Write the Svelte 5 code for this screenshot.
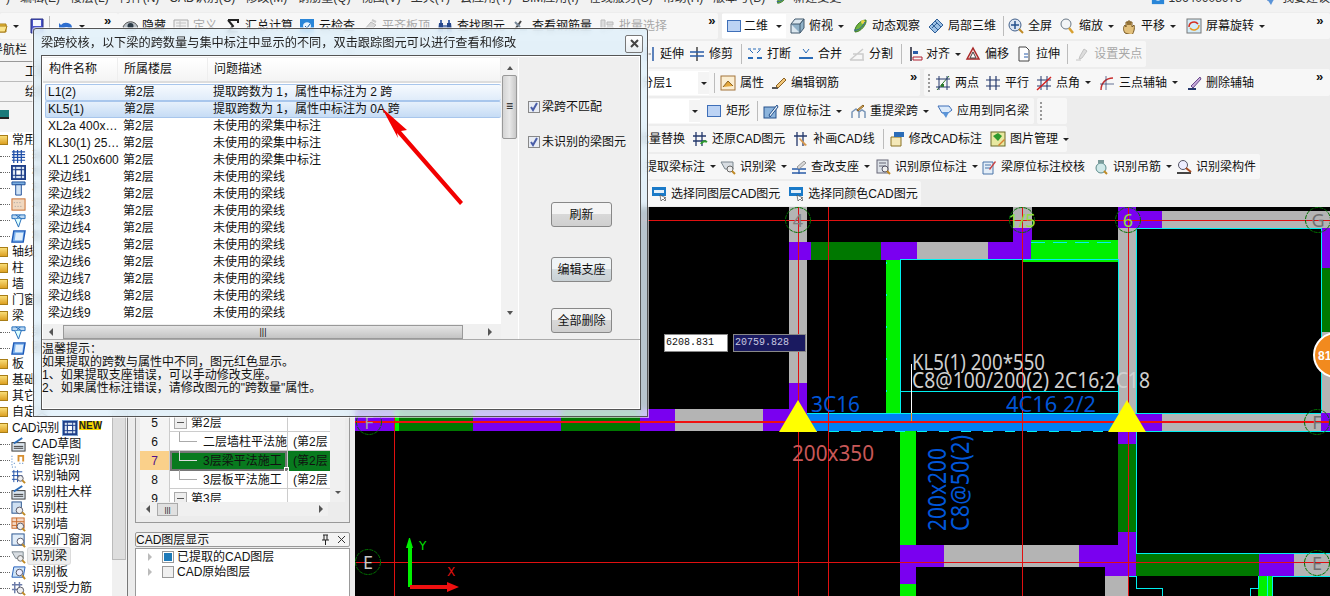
<script>
	const ICONS = {
		folder: '<path d="M1 5h5l1 1h7v8H1z" fill="#f2c53d" stroke="#a87d16"/><path d="M1 14l2-6h12l-2 6z" fill="#fbe48a" stroke="#a87d16"/>',
		save: '<path d="M2 1h12v14H2z" fill="#4a54c8" stroke="#242c80"/><path d="M4 2h8v6H4z" fill="#f4f6ff"/><path d="M5 10h6v5H5z" fill="#c9d0ea"/>',
		undo: '<path d="M3 7a6 5 0 0 1 11 3c0 2-1 3-2 4 0-4-3-6-6-4l2 2H1V5l2 2z" fill="#2f6fd0"/>',
		eye: '<path d="M1 9c3-7 12-7 15 0-3 5-12 5-15 0z" fill="#b9c0c6" stroke="#555"/><circle cx="8.500" cy="8" r="3" fill="#2c3a46"/>',
		doc: '<path d="M1 2h14v12H1z" fill="#f0f0f0" stroke="#aaa"/><path d="M3 5h10M3 8h10M3 11h10M7 3v10" stroke="#c4c4c4"/>',
		sigma: '<path d="M3 2h10v3M13 14H3l5-6-5-6" fill="none" stroke="#222" stroke-width="2"/>',
		cloud: '<path d="M1 1h14v14H1z" fill="#2a86d8"/><path d="M4 8c0-5 8-5 8 0 0 4-8 4-8 0z" fill="#e8f3fc"/><path d="M6 8l2 2 3-4" stroke="#1a5ea8" fill="none"/>',
		flat: '<path d="M2 12l7-8 5 3-7 7z" fill="#d8d8d8" stroke="#bbb"/><path d="M10 2l4 2" stroke="#c8c8c8" stroke-width="2"/>',
		binoc: '<path d="M2 5h4v9H1zM10 5h4l1 9h-5z" fill="#27488c"/><path d="M6 7h4v3H6z" fill="#6f87b8"/><path d="M3 2h2v3H3zM11 2h2v3h-2z" fill="#4c6cac"/>',
		rebar: '<path d="M2 13L9 3" stroke="#444" stroke-width="2"/><path d="M8 12h7M3 4l5 5" stroke="#7a8a9a" stroke-width="2"/>',
		batch: '<path d="M2 2h4v12H2zM8 4h6v3H8zM8 9h6v3H8z" fill="#ddd" stroke="#bbb"/>',
		square: '<rect x="1.500" y="2.500" width="13" height="11" fill="#bcd3f4" stroke="#3f6fb8"/>',
		cube: '<path d="M2 6l4-5h9l-4 5v9H2z" fill="#dbe7ef" stroke="#41586c"/><path d="M2 6h9v9M11 6l4-5v9l-4 5" fill="#8fb1c8" stroke="#41586c"/>',
		orbit: '<path d="M3 14C2 9 8 2 14 2c1 4-5 12-11 12z" fill="#70b43c" stroke="#3d7a26"/><circle cx="11" cy="4" r="2" fill="#e8d648"/><path d="M2 12c4 1 8-2 11-8" stroke="#2a5ca8" fill="none"/>',
		local3d: '<path d="M1 9l8-8 6 6-8 8z" fill="#9cc0e4" stroke="#2e5f98"/><path d="M4 6l6 6M7 3l6 6M9 5l-5 5" stroke="#2e5f98"/>',
		full: '<circle cx="7" cy="7" r="6" fill="#dbe5f2" stroke="#44628c"/><path d="M7 3v8M3 7h8" stroke="#24508c" stroke-width="1.500"/><path d="M11 11l4 4" stroke="#c08a24" stroke-width="2"/>',
		glass: '<circle cx="7" cy="6" r="5" fill="#f2f4f6" stroke="#6a7886"/><path d="M10 10l4 5" stroke="#d8a030" stroke-width="2.500"/>',
		hand: '<path d="M4 15c-2-3-2-6 0-8l1 2V4h2v3-4h2v4-3h2v5l2-2c1 3 0 7-2 10z" fill="#e2c07c" stroke="#7a5a24"/>',
		rotate: '<rect x="1" y="1" width="14" height="14" fill="#d4ecf8" stroke="#777"/><path d="M3 9a5 5 0 0 1 9-3" stroke="#d43020" stroke-width="1.500" fill="none"/><path d="M13 7a5 5 0 0 1-9 3" stroke="#e89a20" stroke-width="1.500" fill="none"/>',
		extend: '<path d="M7 1v14M13 1v14" stroke="#2a5ca8" stroke-width="1.500"/><path d="M1 8h10" stroke="#777"/>',
		trim: '<path d="M8 1v14" stroke="#444" stroke-width="1.500"/><path d="M1 6h14M1 10h14" stroke="#2a5ca8" stroke-width="1.500"/>',
		breaks: '<path d="M1 12h5M10 12h5" stroke="#2a6cb8" stroke-width="2"/><path d="M3 4l3 3M13 4l-3 3" stroke="#2a6cb8"/><path d="M1 3h14" stroke="#2a6cb8" stroke-dasharray="3 2"/>',
		merge: '<path d="M1 12h14" stroke="#2a6cb8" stroke-width="2"/><path d="M5 3l3 4 3-4" stroke="#2a6cb8" fill="none"/>',
		split: '<path d="M1 14L14 3M1 14h14M4 8h10v6" stroke="#ccc" stroke-width="1.500" fill="none"/>',
		align: '<path d="M3 1v14" stroke="#223" stroke-width="1.500"/><path d="M5 5h5v3H5z" fill="#2a5ca8"/><path d="M5 11h9v3H5z" fill="none" stroke="#b02030"/>',
		offset: '<path d="M2 13L8 2l6 11z" fill="#f4d4d0" stroke="#a82828" stroke-width="1.500"/><path d="M5 12l3-6 3 6z" fill="#fff" stroke="#444"/>',
		stretch: '<path d="M3 1h7l3 3v11H3z" fill="#fff" stroke="#444"/><path d="M8 8h4M8 11h4" stroke="#2a5ca8"/>',
		grip: '<path d="M2 14h5M10 3l3 2-5 7-3 1 1-3z" fill="#ddd" stroke="#c4c4c4"/>',
		prop: '<rect x="1" y="1" width="14" height="14" fill="#fbeed2" stroke="#a4743a"/><path d="M3 12l5-6 5 5" fill="#e4a83c" stroke="#8a6224"/>',
		editbar: '<path d="M1 13h6" stroke="#222" stroke-width="1.500"/><path d="M5 11l8-8 2 2-8 8z" fill="#f2c678" stroke="#8a6224"/>',
		twopts: '<path d="M2 15L14 1" stroke="#2e7a2e"/><path d="M1 4h14M1 12h14M4 1v14M12 1v14" stroke="#24386c"/><path d="M6 9h3v3H6z" fill="#2e7a2e"/>',
		parallel: '<path d="M1 5h14M1 11h14M5 1v14M11 1v14" stroke="#24386c" stroke-width="1.200"/>',
		angle: '<path d="M1 5h14M1 11h14M5 1v14M11 1v14" stroke="#24386c"/><path d="M1 15L15 2" stroke="#d42020" stroke-width="1.500"/>',
		three: '<path d="M2 15c0-7 5-12 12-12" stroke="#c83030" fill="none" stroke-width="1.500"/><path d="M1 9h14M7 1v14" stroke="#24386c" stroke-width=".7"/>',
		delaxis: '<path d="M2 14h8" stroke="#24386c" stroke-width="2"/><path d="M5 11l9-9 1 2-8 9z" fill="#c4a8d8" stroke="#6a4a8c"/>',
		inplace: '<rect x="1" y="4" width="12" height="11" fill="#8cb4dc" stroke="#24508c"/><path d="M6 12l8-10 1 2-8 10z" fill="#e8f0f8" stroke="#24508c"/>',
		refetch: '<path d="M2 15V9l4-3 3 3v6M9 15V9l3-2 3 2v6" fill="none" stroke="#7a96b8" stroke-width="1.500"/><path d="M7 7l6-5 1 1-6 5z" fill="#e8b860" stroke="#8a6224"/>',
		apply: '<path d="M1 3h11l3 4-4 3H5z" fill="#dbeafa" stroke="#3f6fb8"/><path d="M5 9h7l-3 6z" fill="#5a94d8"/>',
		restore: '<path d="M4 1v14M10 1v14M1 5h13M1 10h13" stroke="#24386c" stroke-width="1.300"/><path d="M9 13a4 4 0 0 1 6-2" stroke="#2e9a2e" stroke-width="2" fill="none"/>',
		redraw: '<path d="M4 1v14M10 1v14M1 5h13" stroke="#24386c" stroke-width="1.300"/><path d="M7 7l7 7-2 1-6-7z" fill="#d89a50"/>',
		cadedit: '<path d="M2 6h10v9H2z" fill="#f4e8b8" stroke="#8a7224"/><path d="M5 1h10v5H5z" fill="#2a6cb8"/>',
		picture: '<rect x="1" y="1" width="14" height="14" fill="#e8e8a0" stroke="#6a6a28"/><path d="M3 5l5-3 4 3-4 5z" fill="#2e9a2e"/><path d="M8 14l6-6 1 1-6 6z" fill="#d88030"/>',
		recbeam: '<path d="M1 3h12v7H5z" fill="#d8dde2" stroke="#7a868e"/><circle cx="10" cy="10" r="3" fill="#eee" stroke="#666"/><path d="M12 12l3 3" stroke="#c08a24" stroke-width="2"/>',
		support: '<path d="M1 10h14M1 14h14M8 10v5" stroke="#2a5ca8" stroke-width="1.300"/><path d="M6 8l7-6 2 2-7 6z" fill="#d8d8d8" stroke="#999"/>',
		recplace: '<rect x="2" y="1" width="11" height="13" fill="#dde2e8" stroke="#667"/><path d="M4 4h7M4 7h7" stroke="#667"/><circle cx="10" cy="10" r="3" fill="#eee" stroke="#556"/><path d="M12 12l3 3" stroke="#c08a24" stroke-width="2"/>',
		verify: '<path d="M2 3h10v12H2z" fill="#e4eef8" stroke="#4a74a8"/><path d="M4 6h6M4 9h6" stroke="#4a74a8"/><path d="M8 10l6-8 1 1-6 8z" fill="#c84040"/>',
		stirrup: '<circle cx="8" cy="9" r="5" fill="#cfe8e8" stroke="#5a8a8a"/><path d="M5 1h6v3H5z" fill="#7a9a9a"/><path d="M11 12l3 3" stroke="#c08a24" stroke-width="2"/>',
		member: '<path d="M1 14h14" stroke="#444" stroke-width="2"/><circle cx="7" cy="6" r="4.500" fill="#eef" stroke="#556"/><path d="M10 9l5 4" stroke="#a84a20" stroke-width="2"/>',
		cadsel: '<rect x="1" y="1" width="14" height="9" fill="#1a7ac8"/><path d="M3 4h10v3H3z" fill="#e4f0fa"/><path d="M9 9l1 6 2-2 2 2 1-1-2-2h2z" fill="#fff" stroke="#333" stroke-width=".6"/>',
		grid: '<path d="M1 3h14M1 6h14M1 9h14M1 12h14M3 1v14M7 1v14M11 1v14" stroke="#1e4ea8" stroke-width="1.300"/>',
		frame: '<rect x="1" y="1" width="14" height="14" fill="#d8e4f2" stroke="#1e3e88" stroke-width="2"/><rect x="5" y="5" width="6" height="6" fill="#fff" stroke="#1e3e88"/><path d="M1 5h14M1 11h14M5 1v14M11 1v14" stroke="#1e3e88"/>',
		column: '<path d="M1 1h14v3H1z" fill="#7aaee0" stroke="#1e4e98"/><path d="M5 4h6v11H5z" fill="#cfe2f5" stroke="#1e4e98"/>',
		wall: '<rect x="1" y="2" width="14" height="12" fill="#f0d8c0" stroke="#c86a2a"/><path d="M3 6h8M4 10h9" stroke="#999" stroke-dasharray="1 2"/>',
		beam: '<path d="M1 2h14v4H1z" fill="#bcd8f2" stroke="#1e6ab8"/><path d="M4 6l4 9 3-9" fill="#dff" stroke="#1e6ab8"/><path d="M5 2l6 4M10 2L6 6" stroke="#1e6ab8"/>',
		slab: '<path d="M3 2h12l-2 12H1z" fill="#7ab0ec" stroke="#1e5ab8" stroke-width="1.500"/><path d="M5 4h8l-1 8H4z" fill="#e0eefc"/>',
		cad: '<rect x="1" y="6" width="14" height="9" fill="#dbe4ec" stroke="#333"/><path d="M3 7l9-6" stroke="#2a6cb8" stroke-width="2"/><path d="M3 10h10M3 12h10" stroke="#333"/>',
		magnet: '<path d="M7 2h7v7h-2V4h-3v5H7z" fill="#d89030"/><path d="M1 3v12h6" stroke="#2a6cb8" stroke-dasharray="1 2" fill="none"/><path d="M3 11h2M9 11h4" stroke="#2a6cb8" stroke-dasharray="1 2"/>',
		recgrid: '<path d="M1 3h11M1 7h11M1 11h11M3 1v13M7 1v13" stroke="#1e4ea8"/><circle cx="10" cy="10" r="3" fill="#eee" stroke="#556"/><path d="M12 12l3 3" stroke="#c08a24" stroke-width="2"/>',
		reccol: '<rect x="1" y="1" width="10" height="12" fill="#cfe0f2" stroke="#24508c"/><circle cx="9" cy="10" r="3.500" fill="#eee" stroke="#556"/><path d="M12 12l3 3" stroke="#c08a24" stroke-width="2"/>',
		recwall: '<rect x="1" y="1" width="13" height="11" fill="#f4d8c4" stroke="#c86a2a"/><path d="M1 5h13M1 9h13M6 1v11" stroke="#c86a2a"/><circle cx="10" cy="10" r="3.500" fill="#eee" stroke="#556"/><path d="M12 12l3 3" stroke="#c08a24" stroke-width="2"/>',
		recdoor: '<rect x="1" y="1" width="13" height="12" fill="#e0ecf8" stroke="#24508c"/><circle cx="10" cy="9" r="3.500" fill="#fff" stroke="#556"/><path d="M12 12l3 3" stroke="#c08a24" stroke-width="2"/>',
		recslab: '<path d="M3 2h12l-2 11H1z" fill="#cfe4f8" stroke="#1e5ab8"/><circle cx="9" cy="8" r="3.500" fill="#eef" stroke="#556"/><path d="M12 11l3 4" stroke="#c08a24" stroke-width="2"/>',
		recbar: '<path d="M1 4h11M1 9h11M4 1v12M9 1v12" stroke="#6a7aa8" stroke-width="1.500"/><circle cx="10" cy="10" r="3.500" fill="#eee" stroke="#556"/><path d="M12 12l3 3" stroke="#c08a24" stroke-width="2"/>'
	};

	const R1 = [
		{ x: 0, w: 118, items: [
			{ i: 'folder', ml: -8, caret: true, noPad: true },
			{ i: 'save', ml: 10, noPad: true },
			{ sep: true, ml: 4 },
			{ i: 'undo', ml: 6, caret: true, noPad: true },
			{ more: true, ml: 19 }
		] },
		{ x: 118, w: 600, items: [
			{ t: '隐藏', i: 'eye' },
			{ t: '定义', i: 'doc', gray: true, ml: -1 },
			{ t: '汇总计算', i: 'sigma' },
			{ t: '云检查', i: 'cloud', ml: -2 },
			{ t: '平齐板顶', i: 'flat', gray: true, ml: -1 },
			{ t: '查找图元', i: 'binoc', ml: -1 },
			{ t: '查看钢筋量', i: 'rebar', ml: -1 },
			{ t: '批量选择', i: 'batch', gray: true, ml: -1 },
			{ more: true, ml: 37 }
		] },
		{ x: 722, w: 608, items: [
			{ t: '二维', i: 'square', caret: true, white: true, narrow: true },
			{ t: '俯视', i: 'cube', caret: true, ml: -1 },
			{ t: '动态观察', i: 'orbit' },
			{ t: '局部三维', i: 'local3d' },
			{ sep: true },
			{ t: '全屏', i: 'full', ml: -2 },
			{ t: '缩放', i: 'glass', caret: true, ml: -1 },
			{ t: '平移', i: 'hand', caret: true, ml: -1 },
			{ t: '屏幕旋转', i: 'rotate', caret: true, ml: 2 },
			{ more: true, ml: 47 }
		] }
	];

	const ROW_H = [28, 29, 28, 28, 27, 27];

	const RIGHT_ROWS = [
		[
			{ x: 636, w: 510, items: [
				{ t: '延伸', i: 'extend' }, { t: '修剪', i: 'trim', ml: -3 }, { sep: true, ml: 4 },
				{ t: '打断', i: 'breaks', ml: -1 }, { t: '合并', i: 'merge', ml: -1 }, { t: '分割', i: 'split', ml: -1 }, { sep: true, ml: 4 },
				{ t: '对齐', i: 'align', caret: true, narrow: true },
				{ t: '偏移', i: 'offset', ml: -4 }, { t: '拉伸', i: 'stretch', ml: -1 }, { sep: true },
				{ t: '设置夹点', i: 'grip', gray: true }
			] }
		],
		[
			{ x: 620, w: 300, items: [
				{ combo: '分层1', w: 89 }, { sep: true, ml: 5 },
				{ t: '属性', i: 'prop', ml: -1 }, { t: '编辑钢筋', i: 'editbar', ml: -1 },
				{ more: true, ml: 67 }
			] },
			{ x: 924, w: 406, gap: 4, items: [
				{ dots: true },
				{ t: '两点', i: 'twopts', ml: 1 }, { t: '平行', i: 'parallel', ml: -2 },
				{ t: '点角', i: 'angle', caret: true, ml: -1 },
				{ t: '三点辅轴', i: 'three', caret: true },
				{ t: '删除辅轴', i: 'delaxis' },
				{ more: true, ml: 58 }
			] }
		],
		[
			{ x: 620, w: 414, items: [
				{ combo: '', w: 80 },
				{ t: '矩形', i: 'square', ml: 2 }, { sep: true },
				{ t: '原位标注', i: 'inplace', caret: true, ml: -1 },
				{ t: '重提梁跨', i: 'refetch', caret: true },
				{ t: '应用到同名梁', i: 'apply' }
			] },
			{ x: 1037, w: 30, gap: 3, items: [{ dots: true }] }
		],
		[
			{ x: 613, w: 454, items: [
				{ t: '批量替换', i: 'batch' },
				{ t: '还原CAD图元', i: 'restore', ml: -1 },
				{ t: '补画CAD线', i: 'redraw' },
				{ sep: true, ml: 4 },
				{ t: '修改CAD标注', i: 'cadedit', ml: -1 },
				{ t: '图片管理', i: 'picture', caret: true }
			] }
		],
		[
			{ x: 621, w: 639, items: [
				{ t: '提取梁标注', i: 'recbeam', caret: true },
				{ t: '识别梁', i: 'recbeam', caret: true, ml: -4 },
				{ t: '查改支座', i: 'support', caret: true, ml: -4 },
				{ t: '识别原位标注', i: 'recplace', caret: true, ml: -3 },
				{ t: '梁原位标注校核', i: 'verify', ml: -5 },
				{ t: '识别吊筋', i: 'stirrup', caret: true },
				{ t: '识别梁构件', i: 'member', ml: -4 }
			] }
		],
		[
			{ x: 647, w: 274, items: [
				{ t: '选择同图层CAD图元', i: 'cadsel' },
				{ t: '选择同颜色CAD图元', i: 'cadsel' }
			] }
		]
	];

	const MENU = ['编辑(E)', '楼层(L)', '构件(N)', 'CAD识别(C)', '修改(M)', '钢筋量(Q)', '视图(V)', '工具(T)', '云应用(Y)', 'BIM应用(I)', '在线服务(S)', '帮助(H)', '版本号(B)'];

	const TREE = [
		{ t: '常用', top: 1 }, { i: 'grid', t: '轴网' }, { i: 'frame', t: '框架' }, { i: 'column', t: '柱' }, { i: 'wall', t: '墙' }, { i: 'beam', t: '梁' }, { i: 'slab', t: '板' },
		{ t: '轴线', top: 1 }, { t: '柱', top: 1 }, { t: '墙', top: 1 }, { t: '门窗洞', top: 1 }, { t: '梁', top: 2 }, { i: 'beam', t: '梁' }, { i: 'slab', t: '圈梁' },
		{ t: '板', top: 1 }, { t: '基础', top: 1 }, { t: '其它', top: 1 }, { t: '自定义', top: 1 }, { t: 'CAD识别', top: 2, isCad: true },
		{ i: 'cad', t: 'CAD草图' }, { i: 'magnet', t: '智能识别' }, { i: 'recgrid', t: '识别轴网' }, { i: 'cad', t: '识别柱大样' }, { i: 'reccol', t: '识别柱' }, { i: 'recwall', t: '识别墙' }, { i: 'recdoor', t: '识别门窗洞' },
		{ i: 'recbeam', t: '识别梁', sel: true }, { i: 'recslab', t: '识别板' }, { i: 'recbar', t: '识别受力筋' }
	];

	const GRID = [
		{ n: 5, t: '第2层', head: true },
		{ n: 6, t: '二层墙柱平法施', f: '(第2层' },
		{ n: 7, t: '3层梁平法施工', f: '(第2层', sel: true },
		{ n: 8, t: '3层板平法施工', f: '(第2层' },
		{ n: 9, t: '第3层', head: true }
	];

	const USED = '未使用的梁集中标注';
	const LINE = '未使用的梁线';
	const ROWS = [
		{ a: 'L1(2)', c: '提取跨数为 1，属性中标注为 2 跨', hl: 1 },
		{ a: 'KL5(1)', c: '提取跨数为 1，属性中标注为 0A 跨', hl: 2 },
		{ a: 'XL2a 400x…', c: USED },
		{ a: 'KL30(1) 25…', c: USED },
		{ a: 'XL1 250x600', c: USED },
		...[1, 2, 3, 4, 5, 6, 7, 8, 9].map((n) => ({ a: '梁边线' + n, c: LINE }))
	];

	const PURPLE = '#7a00f0';
	const GRAY = '#b4b4b4';
	const DARK = '#007800';
	const BRIGHT = '#00f000';
	const BLUE = '#0080f4';

	// [x, y, w, h, colour], screen coordinates
	const BLOCKS = [
		[355, 409, 39, 22, PURPLE], [394, 409, 5, 22, BRIGHT], [399, 409, 74, 22, DARK], [473, 409, 88, 22, PURPLE], [561, 409, 79, 22, DARK],
		[640, 409, 35, 22, PURPLE], [675, 409, 88, 22, GRAY], [763, 409, 44, 22, PURPLE],
		[789, 207, 18, 176, GRAY], [789, 383, 18, 26, PURPLE], [789, 242, 22, 18, PURPLE], [811, 242, 70, 18, DARK], [881, 242, 36, 18, PURPLE],
		[917, 242, 71, 18, GRAY], [988, 242, 44, 18, PURPLE], [1013, 207, 19, 21, GRAY], [1013, 228, 19, 14, PURPLE],
		[1031, 240, 87, 19, BRIGHT], [1022, 259, 96, 3, BRIGHT], [886, 260, 14, 153, BRIGHT],
		[1118, 228, 18, 185, GRAY], [1118, 207, 18, 21, PURPLE], [1136, 211, 26, 17, PURPLE], [1162, 211, 168, 17, GRAY],
		[1321, 228, 9, 40, PURPLE], [1321, 268, 9, 64, DARK], [1321, 332, 9, 81, GRAY],
		[807, 413, 311, 18, BLUE], [1118, 413, 44, 18, PURPLE], [1162, 413, 159, 18, GRAY], [1321, 413, 9, 18, PURPLE],
		[900, 431, 16, 114, BRIGHT], [1118, 431, 18, 13, PURPLE], [1118, 444, 18, 88, DARK], [1118, 532, 18, 22, PURPLE],
		[900, 545, 44, 22, PURPLE], [944, 545, 135, 22, GRAY], [1079, 545, 57, 22, PURPLE], [900, 567, 16, 17, PURPLE], [900, 584, 16, 12, BRIGHT],
		[1105, 567, 31, 9, PURPLE], [1105, 576, 23, 20, GRAY],
		[1136, 554, 123, 22, DARK], [1259, 554, 35, 22, PURPLE], [1294, 554, 36, 22, GRAY], [1258, 576, 9, 20, BRIGHT], [1268, 576, 4, 20, BRIGHT]
	];

	const CYAN_LINES = [
		'M1136 228H1321V413', 'M900 259H1118', 'M900 391H1118', 'M900 259V413', 'M1118 259V413', 'M1136 228V413',
		'M807 413H1321', 'M1118 431H1330', 'M1136 431V553H1330', 'M1128 576H1136V588H1162V596', 'M1250 596V588H1258V576M1267 576V596M1272 596V576H1330'
	];

	const AXES = [
		{ x: 798, y: 220, t: '4', c: '#808080' }, { x: 1022, y: 220, t: '1/5', c: '#90e040' }, { x: 1128, y: 220, t: '6', c: '#90e040' },
		{ x: 1318, y: 220, t: 'G', c: '#707070' }, { x: 1317, y: 422, t: 'F', c: '#707070' }, { x: 1317, y: 563, t: 'E', c: '#707070' },
		{ x: 369, y: 422, t: 'F', c: '#a0a0a0' }, { x: 368, y: 562, t: 'E', c: '#c8c8c8' }
	];
</script>

{#snippet icon(name, size = 16)}
	<svg class="ico" width={size} height={size} viewBox="0 0 16 16">{@html ICONS[name]}</svg>
{/snippet}

{#snippet toolbar(group)}
	<div class="group" style:left="{group.x}px" style:width="{group.w}px" style:padding-left="{group.gap || 0}px">
		{#each group.items as it}
			{#if it.sep}
				<span class="sep" style:margin-left="{it.ml ?? 3}px"></span>
			{:else if it.more}
				<span class="more" style:margin-left="{it.ml ?? 0}px">»</span>
			{:else if it.dots}
				<span class="dots"></span>
			{:else if it.combo !== undefined}
				<span class="combo" style:width="{it.w}px"><span class="combo-text">{it.combo}</span><span class="combo-btn"><span class="caret"></span></span></span>
			{:else}
				<span class="item" class:white={it.white} class:gray={it.gray} class:nopad={it.noPad} class:narrow={it.narrow} style:margin-left="{it.ml ?? 0}px">
					{@render icon(it.i)}
					{#if it.t}<span class="lbl">{it.t}</span>{/if}
					{#if it.caret}<span class="caret-box"><span class="caret"></span></span>{/if}
				</span>
			{/if}
		{/each}
	</div>
{/snippet}

<div class="app">
	<div class="menu">
		<span>)</span>
		{#each MENU as m}
			<span>{m}</span>
		{/each}
		<span>{@render icon('orbit', 14)} 新建变更</span>
		<span class="m-right">{@render icon('cloud', 14)} 18640908978 <i class="caret dark"></i></span>
		<span class="m-sug">{@render icon('apply', 16)} 我要建议</span>
	</div>

	<div class="row first">
		{#each R1 as g}
			{@render toolbar(g)}
		{/each}
	</div>

	<div class="main">
		<aside class="side">
			<div class="nav-head">导航栏</div>
			<div class="nav-tab">工程设置</div>
			<div class="nav-tab">绘图输入</div>
			<div class="nav-tool"><span class="tool-mark"></span></div>
			<div class="tree">
				{#each TREE as n}
					{#if n.top}
						<div class="node">
							<span class="fold" class:open={n.top === 2}></span>
							<span class="node-t" class:cad-t={n.isCad}>{n.t}</span>
							{#if n.isCad}
								<span class="cad-btn">{@render icon('frame', 14)}</span>
								<span class="new">NEW</span>
							{/if}
						</div>
					{:else}
						<div class="node child">
							<span class="dash"></span>
							{@render icon(n.i, 15)}
							<span class="node-t" class:picked={n.sel}>{n.t}</span>
						</div>
					{/if}
				{/each}
			</div>
			<div class="side-scroll"><span class="side-thumb"></span></div>
		</aside>

		<section class="panel">
			<div class="frame1">
				<div class="grid-wrap">
					<div class="grid">
						{#each GRID as g}
							<div class="g-row" class:picked={g.sel}>
								<span class="g-no">{g.n}</span>
								{#if g.head}
									<span class="g-name head"><span class="minus"></span>{g.t}</span>
								{:else}
									<span class="g-name"><span class="branch"></span>{g.t}</span>
								{/if}
								<span class="g-floor">{g.f || ''}</span>
							</div>
						{/each}
					</div>
					<div class="g-vs"><span class="caret dark"></span></div>
				</div>
				<div class="g-hs"><span class="tri-l"></span><span class="g-thumb">|||</span><span class="tri-r"></span></div>
			</div>
			<div class="cap">
				<span>CAD图层显示</span>
				<span class="cap-btns">
					<svg width="9" height="11" viewBox="0 0 9 11"><path d="M2 1h5M3 1v5M6 1v5M1 6h7M4.500 6v5" stroke="#222" fill="none" /></svg>
					<svg width="9" height="9" viewBox="0 0 9 9"><path d="M1 1l7 7M8 1L1 8" stroke="#333" fill="none" /></svg>
				</span>
			</div>
			<div class="frame2">
				<div class="layer"><span class="tri-o"></span><span class="lbox on"></span>已提取的CAD图层</div>
				<div class="layer"><span class="tri-o"></span><span class="lbox"></span>CAD原始图层</div>
			</div>
		</section>

		<div class="right">
			<div class="rows">
				{#each RIGHT_ROWS as row, idx}
					<div class="row" style:height="{ROW_H[idx]}px">
						{#each row as g}
							{@render toolbar({ ...g, x: g.x - 355 })}
						{/each}
					</div>
				{/each}
			</div>
			<div class="canvas">
				<svg width="975" height="389" viewBox="355 207 975 389">
					<g shape-rendering="crispEdges">
						{#each BLOCKS as b}
							<rect x={b[0]} y={b[1]} width={b[2]} height={b[3]} fill={b[4]} />
						{/each}
						{#each CYAN_LINES as d}
							<path {d} fill="none" stroke="#00f0f0" />
						{/each}
						<path d="M886 262V413" stroke="#00f0f0" stroke-dasharray="2 30" />
						<path d="M1031 242H1118" stroke="#00f0f0" stroke-dasharray="14 8" />
						<path d="M807 431H1118" stroke="#00f0f0" stroke-dasharray="10 12" />
						<path d="M911 364V413" stroke="#fff" />
						<path d="M911 413V421" stroke="#ffa020" />
						<path d="M355 220H1330M355 562.500H1330" stroke="#e01010" />
						<path d="M355 421.500H1330" stroke="#f01010" stroke-width="2" />
						<path d="M394 415V596M798 207V596M828 207V596M1022 207V596M1128 207V596" stroke="#e01010" />
					</g>

					<path d="M798 400L817 432H779zM1127 400L1146 432H1108z" fill="#ffff00" />

					{#each AXES as a}
						<circle cx={a.x} cy={a.y} r="12.500" fill="none" stroke="#007000" stroke-dasharray="4 1" />
						<text x={a.x} y={a.y + 7} class="axis" fill={a.c} text-anchor="middle">{a.t}</text>
					{/each}

					<text x="912" y="370" class="note" textLength="133" lengthAdjust="spacingAndGlyphs">KL5(1) 200*550</text>
					<text x="912" y="388" class="note" textLength="238" lengthAdjust="spacingAndGlyphs">C8@100/200(2) 2C16;2C18</text>
					<text x="811" y="412" class="rebar" textLength="49" lengthAdjust="spacingAndGlyphs">3C16</text>
					<text x="1006" y="412" class="rebar" textLength="90" lengthAdjust="spacingAndGlyphs">4C16 2/2</text>
					<text x="792" y="461" class="sect" textLength="82" lengthAdjust="spacingAndGlyphs">200x350</text>
					<text transform="translate(946 531) rotate(-90)" class="rebar wide" textLength="83" lengthAdjust="spacingAndGlyphs">200x200</text>
					<text transform="translate(969 531) rotate(-90)" class="rebar wide" textLength="96" lengthAdjust="spacingAndGlyphs">C8@50(2)</text>

					<!-- ucs -->
					<path d="M408 587V548h-2l3-10h1l3 10h-1V587z" fill="#00f000" />
					<path d="M410 585H447V582l12 5-12 5V589H410z" fill="#f01010" />
					<text x="419" y="550" class="ucs" fill="#00e000">Y</text>
					<text x="447" y="576" class="ucs" fill="#e01010">X</text>
				</svg>
				<div class="coord" style:left="309px">6208.831</div>
				<div class="coord dark-c" style:left="378px">20759.828</div>
				<div class="bubble">81</div>
			</div>
		</div>
	</div>

	<div class="dialog">
		<div class="d-title">
			<span>梁跨校核，以下梁的跨数量与集中标注中显示的不同，双击跟踪图元可以进行查看和修改</span>
			<button class="d-close" aria-label="close">
				<svg width="9" height="9" viewBox="0 0 9 9"><path d="M1 1l7 7M8 1L1 8" stroke="#444" stroke-width="2" /></svg>
			</button>
		</div>
		<div class="d-client">
			<div class="d-body">
				<div class="listbox">
					<div class="list">
						<div class="l-head">
							<span class="c1">构件名称</span><span class="c2">所属楼层</span><span class="c3">问题描述</span>
						</div>
						<div class="l-rows">
							{#each ROWS as r}
								<div class="l-row" class:h1={r.hl === 1} class:h2={r.hl === 2}>
									<span class="c1">{r.a}</span><span class="c2">第2层</span><span class="c3">{r.c}</span>
								</div>
							{/each}
						</div>
						<div class="hs"><span class="tri-l"></span><span class="hs-thumb">|||</span><span class="tri-r"></span></div>
					</div>
					<div class="vs">
						<span class="caret up"></span>
						<span class="vs-thumb">≡</span>
						<span class="caret dark down"></span>
					</div>
				</div>
				<div class="opts">
					<label class="chk one"><span class="box"><svg width="10" height="10" viewBox="0 0 10 10"><path d="M2 5l2 3 4-7" fill="none" stroke="#4a5ea8" stroke-width="2" /></svg></span>梁跨不匹配</label>
					<label class="chk two"><span class="box"><svg width="10" height="10" viewBox="0 0 10 10"><path d="M2 5l2 3 4-7" fill="none" stroke="#4a5ea8" stroke-width="2" /></svg></span>未识别的梁图元</label>
					<button class="btn b1">刷新</button>
					<button class="btn b2">编辑支座</button>
					<button class="btn b3">全部删除</button>
				</div>
			</div>
			<div class="hint">
				温馨提示：<br />
				如果提取的跨数与属性中不同，图元红色显示。<br />
				1、如果提取支座错误，可以手动修改支座。<br />
				2、如果属性标注错误，请修改图元的"跨数量"属性。
			</div>
		</div>
	</div>

	<svg class="arrow" width="110" height="110" viewBox="370 100 110 110">
		<path d="M382 108L407 130 401 131 463 202 460 205 397 133 398 138z" fill="#f20000" />
	</svg>
</div>

<style>
	:global(body) {
		margin: 0;
		background: #ededed;
	}

	.app {
		position: relative;
		width: 1330px;
		height: 596px;
		overflow: hidden;
		background: #ededed;
		color: #111;
		font: 12px/16px 'Liberation Sans', 'Noto Sans CJK SC', sans-serif;
	}

	.ico {
		flex: none;
		display: block;
	}

	.menu {
		display: flex;
		align-items: center;
		gap: 10px;
		height: 12px;
		overflow: hidden;
		background: #f2f2f2;
		padding-left: 6px;
		white-space: nowrap;
		color: #333;
	}
	.menu > span {
		display: flex;
		align-items: center;
		gap: 4px;
		transform: translateY(-8px);
	}
	.m-right {
		margin-left: auto;
	}

	.row {
		position: relative;
		height: 28px;
	}
	.group {
		position: absolute;
		top: 1px;
		bottom: 1px;
		display: flex;
		align-items: center;
		background: #f7f7f7;
		border-radius: 2px;
		box-sizing: border-box;
		white-space: nowrap;
	}

	.item {
		display: flex;
		align-items: center;
		height: 24px;
		padding: 0 4px;
		flex: none;
	}
	.item.nopad {
		padding: 0;
	}
	.item.white {
		background: #fff;
	}
	.item.gray {
		color: #a8a8a8;
	}
	.lbl {
		margin-left: 4px;
	}
	.narrow .lbl {
		margin-left: 2px;
	}
	.caret-box {
		width: 11px;
		display: flex;
		justify-content: flex-end;
		flex: none;
	}
	.white .caret-box {
		width: 14px;
	}
	.caret {
		display: inline-block;
		width: 0;
		height: 0;
		border: 3px solid transparent;
		border-top: 3px solid #222;
		border-bottom: 0;
	}
	.caret.dark {
		border-top-color: #555;
	}
	.caret.up {
		border-top: 0;
		border-bottom: 4px solid #555;
	}
	.sep {
		width: 1px;
		height: 20px;
		background: #bcbcbc;
		margin-right: 2px;
		flex: none;
	}
	.more {
		font-weight: 700;
		font-size: 13px;
		line-height: 12px;
		align-self: flex-start;
		margin-top: 2px;
		flex: none;
	}
	.dots {
		width: 2px;
		height: 18px;
		flex: none;
		background: repeating-linear-gradient(#999 0 2px, transparent 2px 4px);
	}
	.combo {
		display: flex;
		align-items: center;
		height: 24px;
		background: #fff;
		flex: none;
	}
	.combo-text {
		flex: 1;
		text-align: right;
		padding-right: 26px;
	}
	.combo-btn {
		width: 11px;
		text-align: center;
		background: #f4f4f4;
		height: 22px;
		line-height: 18px;
	}

	.main {
		display: flex;
		height: 556px;
	}

	.side {
		position: relative;
		width: 128px;
		flex: none;
		background: #f4f4f4;
		border-right: 1px solid #777;
		box-sizing: border-box;
		overflow: hidden;
	}
	.nav-head {
		height: 21px;
		line-height: 20px;
		margin-left: -9px;
		border-bottom: 1px solid #999;
		font-size: 12px;
	}
	.nav-tab {
		height: 19px;
		line-height: 20px;
		padding-left: 25px;
		border-bottom: 1px solid #bbb;
	}
	.nav-tool {
		height: 30px;
		box-sizing: border-box;
		padding-top: 8px;
	}
	.tool-mark {
		display: block;
		width: 9px;
		height: 7px;
		background: #1a7a7a;
		border-bottom: 2px solid #222;
	}
	.tree {
		background: #fff;
		width: 112px;
		height: 490px;
	}
	.node {
		display: flex;
		align-items: center;
		height: 16px;
		white-space: nowrap;
		font-size: 12px;
	}
	.fold {
		width: 8px;
		height: 10px;
		flex: none;
		background: linear-gradient(#f8dc76, #dca023);
		border: 1px solid #a87d16;
		border-left: 0;
		box-sizing: border-box;
		margin-right: 4px;
	}
	.dash {
		width: 10px;
		height: 0;
		border-top: 1px dotted #666;
		margin-right: 1px;
		flex: none;
	}
	.child .node-t {
		margin-left: 5px;
		padding: 0 1px;
	}
	.node-t.picked {
		background: #eeeeee;
		box-shadow: 0 0 0 1px #dcdcdc;
		border-radius: 2px;
		padding: 0 3px;
		margin-left: 2px;
	}
	.cad-t {
		letter-spacing: -0.5px;
	}
	.cad-btn {
		margin-left: 3px;
		border: 1px solid #7aa0d0;
		height: 14px;
		box-sizing: content-box;
	}
	.new {
		font-size: 10px;
		font-weight: 700;
		line-height: 9px;
		height: 9px;
		width: 22px;
		text-align: center;
		background: #f8d800;
		color: #222;
		margin: -6px 0 0 1px;
		flex: none;
	}
	.side-scroll {
		position: absolute;
		top: 0;
		bottom: 0;
		left: 112px;
		width: 14px;
		background: #f0f0f0;
	}
	.side-thumb {
		display: block;
		margin-top: 60px;
		height: 460px;
		background: #dedede;
		border: 1px solid #bbb;
		box-sizing: border-box;
	}

	.panel {
		width: 227px;
		flex: none;
		padding: 0 5px 0 7px;
		box-sizing: border-box;
		background: #ececec;
		overflow: hidden;
	}
	.frame1 {
		height: 483px;
		border: 1px solid #999;
		border-top: 0;
		box-sizing: border-box;
		display: flex;
		flex-direction: column;
		justify-content: flex-end;
		padding: 0 4px 6px;
	}
	.grid-wrap {
		display: flex;
	}
	.grid {
		width: 190px;
		height: 89px;
		overflow: hidden;
		background: #fff;
	}
	.g-row {
		display: grid;
		grid-template-columns: 30px 118px 42px;
		height: 19px;
		line-height: 20px;
		border-bottom: 1px solid #ccc;
		box-sizing: border-box;
		white-space: nowrap;
	}
	.g-no {
		text-align: center;
		background: #f4f4f4;
		border-right: 1px solid #ccc;
	}
	.g-name {
		position: relative;
		padding-left: 33px;
		border-right: 1px solid #ccc;
	}
	.g-name.head {
		padding-left: 21px;
	}
	.minus {
		position: absolute;
		left: 4px;
		top: 3px;
		width: 11px;
		height: 11px;
		border: 1px solid #aaa;
		background: linear-gradient(90deg, transparent 2px, #555 2px 9px, transparent 9px) center / 100% 1px no-repeat #eee;
	}
	.branch {
		position: absolute;
		left: 9px;
		top: 0;
		width: 17px;
		height: 9px;
		border-left: 1px solid #aaa;
		border-bottom: 1px solid #aaa;
	}
	.g-floor {
		padding-left: 5px;
		overflow: hidden;
	}
	.g-row.picked {
		overflow: visible;
	}
	.g-row.picked .g-no {
		background: #fad08a;
		color: #50108a;
	}
	.g-row.picked .g-name {
		background: #087a1e;
		box-shadow: inset 0 0 0 2px #777;
	}
	.g-row.picked .g-name::after {
		content: '';
		position: absolute;
		right: -2px;
		bottom: -1px;
		width: 5px;
		height: 5px;
		background: #777;
		border: 1px solid #fff;
		box-sizing: border-box;
	}
	.g-row.picked .g-floor {
		background: #087a1e;
	}
	.g-row.picked .branch {
		border-color: #ddd;
	}
	.g-vs {
		width: 15px;
		background: #f0f0f0;
		display: flex;
		justify-content: center;
		align-items: flex-end;
		padding-bottom: 8px;
		box-sizing: border-box;
	}
	.g-hs {
		display: flex;
		align-items: center;
		height: 14px;
		width: 188px;
		background: #f0f0f0;
	}
	.g-thumb {
		margin-left: 7px;
		width: 21px;
		height: 13px;
		line-height: 12px;
		text-align: center;
		font-size: 8px;
		background: #e0e0e0;
		border: 1px solid #aaa;
		box-sizing: border-box;
	}
	.g-hs .tri-r {
		margin-left: auto;
		margin-right: 5px;
	}
	.g-hs .tri-l {
		margin-left: 6px;
	}
	.tri-l,
	.tri-r {
		width: 0;
		height: 0;
		border: 4px solid transparent;
		flex: none;
	}
	.tri-l {
		border-right: 4px solid #555;
		border-left: 0;
	}
	.tri-r {
		border-left: 4px solid #555;
		border-right: 0;
	}
	.cap {
		display: flex;
		justify-content: space-between;
		align-items: center;
		height: 15px;
		margin-top: 9px;
		border: 1px solid #999;
		border-radius: 2px;
		background: #f4f4f4;
		box-sizing: border-box;
		white-space: nowrap;
		padding-right: 3px;
		font-size: 12px;
	}
	.cap-btns {
		display: flex;
		align-items: center;
		gap: 7px;
	}
	.frame2 {
		margin-top: 1px;
		height: 60px;
		border: 1px solid #999;
		background: #fff;
		box-sizing: border-box;
		padding: 0 0 0 12px;
	}
	.layer {
		display: flex;
		align-items: center;
		height: 14px;
		white-space: nowrap;
		margin-top: 1px;
	}
	.tri-o {
		width: 0;
		height: 0;
		border: 4px solid transparent;
		border-left: 4px solid #bbb;
		border-right: 0;
		margin-right: 10px;
	}
	.lbox {
		width: 12px;
		height: 12px;
		border: 1px solid #999;
		box-sizing: border-box;
		background: #f0f0f0;
		margin-right: 3px;
	}
	.lbox.on {
		background: #1e7ab8;
		box-shadow: inset 0 0 0 1px #fff;
	}

	.right {
		flex: 1;
		display: flex;
		flex-direction: column;
		min-width: 0;
	}
	.rows {
		height: 167px;
		overflow: hidden;
	}
	.canvas {
		position: relative;
		height: 389px;
		background: #000;
		overflow: hidden;
	}
	.canvas svg {
		display: block;
	}
	.axis {
		font: 18px 'Noto Sans', sans-serif;
	}
	.note {
		font: 22px 'Noto Sans', sans-serif;
		fill: #cfcfcf;
	}
	.rebar {
		font: 22px 'Noto Sans', sans-serif;
		fill: #0056d8;
	}
	.rebar.wide {
		font-size: 25px;
	}
	.sect {
		font: 22px 'Noto Sans', sans-serif;
		fill: #c85858;
	}
	.ucs {
		font: 12px 'DejaVu Sans', sans-serif;
	}
	.coord {
		position: absolute;
		top: 127px;
		width: 64px;
		height: 18px;
		box-sizing: border-box;
		border: 1px solid #888;
		background: #fff;
		color: #111;
		font: 10px/16px 'Liberation Mono', monospace;
		padding-left: 1px;
		overflow: hidden;
	}
	.dark-c {
		width: 73px;
		background: #1a1a60;
		color: #c8c8e0;
	}
	.bubble {
		position: absolute;
		left: 958px;
		top: 125px;
		width: 46px;
		height: 46px;
		line-height: 44px;
		box-sizing: border-box;
		border: 2px solid #fff;
		border-radius: 50%;
		background: #f28a1e;
		color: #fff;
		font-weight: 700;
		font-size: 12px;
		padding-left: 3px;
	}

	.dialog {
		position: absolute;
		left: 33px;
		top: 28px;
		width: 615px;
		height: 389px;
		box-sizing: border-box;
		padding: 0 6px 6px 7px;
		display: flex;
		flex-direction: column;
		background: rgba(224, 240, 250, 0.82);
		backdrop-filter: blur(3px);
		border: 1px solid #555;
		border-radius: 3px 3px 0 0;
		box-shadow: 0 0 0 1px rgba(255, 255, 255, 0.6);
	}
	.d-title {
		height: 26px;
		padding-top: 1px;
		box-sizing: border-box;
		display: flex;
		align-items: center;
		justify-content: space-between;
		white-space: nowrap;
		color: #222;
		font-size: 12.200px;
		flex: none;
	}
	.d-close {
		width: 18px;
		height: 18px;
		padding: 0;
		margin: 2px -2px 0 0;
		background: linear-gradient(#fff, #e8eef2);
		border: 1px solid #777;
		border-radius: 2px;
		display: flex;
		align-items: center;
		justify-content: center;
	}
	.d-client {
		flex: 1;
		display: flex;
		flex-direction: column;
		border: 1px solid #555;
		box-shadow: inset 0 0 0 1px #fff;
		background: #efefef;
		min-height: 0;
	}
	.d-body {
		height: 283px;
		display: flex;
		border-bottom: 1px solid #aaa;
		flex: none;
	}
	.listbox {
		display: flex;
		width: 476px;
		margin: 2px 0 0 1px;
		box-sizing: border-box;
		border-right: 1px solid #fff;
	}
	.list {
		width: 458px;
		display: flex;
		flex-direction: column;
		background: #fff;
		min-width: 0;
	}
	.l-head {
		display: grid;
		grid-template-columns: 75px 90px 1fr;
		height: 23px;
		line-height: 22px;
		background: linear-gradient(#fff, #f4f4f4);
		border-bottom: 2px solid #ddd;
		flex: none;
	}
	.l-head span {
		border-right: 1px solid #eee;
		padding-left: 6px;
		box-sizing: border-box;
	}
	.l-rows {
		flex: 1;
		overflow: hidden;
		padding-top: 1px;
	}
	.l-row {
		display: grid;
		grid-template-columns: 75px 90px 1fr;
		height: 17px;
		line-height: 16px;
		white-space: nowrap;
		box-sizing: border-box;
	}
	.l-row span {
		padding-left: 5px;
	}
	.h1,
	.h2 {
		grid-template-columns: 73px 89px 1fr;
		margin-left: 2px;
		border: 1px solid #a8c6ec;
		border-right: 0;
		border-radius: 2px;
		line-height: 15px;
	}
	.h1 {
		background: linear-gradient(#f6fafe, #e0ecfa);
	}
	.h2 {
		background: linear-gradient(#e6f0fb, #c6dcf5);
	}
	.l-row.h1 .c1,
	.l-row.h2 .c1 {
		padding-left: 2px;
	}
	.hs {
		height: 15px;
		display: flex;
		align-items: center;
		background: #f0f0f0;
		flex: none;
	}
	.hs .tri-l {
		margin-left: 6px;
	}
	.hs .tri-r {
		margin-left: auto;
		margin-right: 9px;
	}
	.hs-thumb {
		margin-left: 10px;
		width: 400px;
		height: 14px;
		line-height: 12px;
		text-align: center;
		font-size: 9px;
		background: linear-gradient(#e4e4e4, #c4c4c4);
		border: 1px solid #999;
		box-sizing: border-box;
	}
	.vs {
		position: relative;
		width: 17px;
		background: #f2f2f2;
		display: flex;
		flex-direction: column;
		align-items: center;
		box-sizing: border-box;
		padding-top: 8px;
	}
	.vs-thumb {
		width: 15px;
		height: 64px;
		margin-top: 5px;
		line-height: 60px;
		text-align: center;
		background: linear-gradient(90deg, #d4d4d4, #e8e8e8, #c8c8c8);
		border: 1px solid #999;
		box-sizing: border-box;
		border-radius: 2px;
	}
	.vs .down {
		position: absolute;
		top: 253px;
		border-top-width: 4px;
	}
	.opts {
		flex: 1;
		position: relative;
	}
	.chk {
		display: flex;
		align-items: center;
		margin-left: 9px;
		white-space: nowrap;
		height: 16px;
	}
	.chk.one {
		margin-top: 43px;
	}
	.chk.two {
		margin-top: 19px;
	}
	.box {
		width: 12px;
		height: 12px;
		margin-right: 2px;
		border: 1px solid #888;
		background: #e8ecf4;
		box-sizing: border-box;
		display: flex;
		align-items: center;
		justify-content: center;
		flex: none;
	}
	.btn {
		display: block;
		margin-left: 32px;
		width: 61px;
		height: 25px;
		padding: 0;
		font: inherit;
		color: #111;
		background: linear-gradient(#f4f4f4 0 50%, #d8d8d8 50%, #cfcfcf);
		border: 1px solid #888;
		border-radius: 3px;
	}
	.b1 {
		margin-top: 52px;
	}
	.b2 {
		margin-top: 30px;
		background: linear-gradient(#f0f4f6 0 50%, #d4dce0 50%, #c8d0d4);
	}
	.b3 {
		margin-top: 26px;
	}
	.hint {
		padding: 3px 0 0 0;
		line-height: 13px;
		white-space: nowrap;
		color: #111;
	}

	.arrow {
		position: absolute;
		left: 370px;
		top: 100px;
	}
</style>
